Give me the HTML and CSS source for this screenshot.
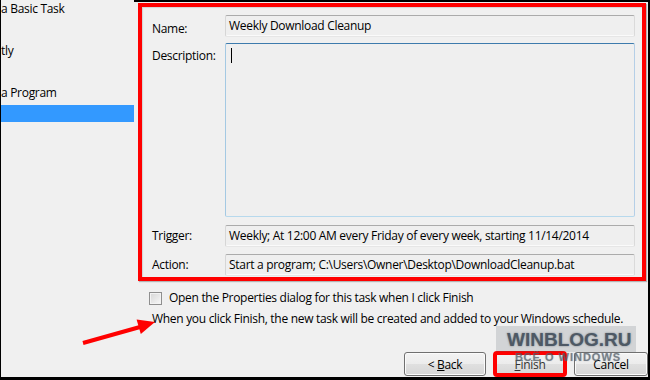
FILE: index.html
```html
<!DOCTYPE html>
<html>
<head>
<meta charset="utf-8">
<link rel="stylesheet" href="styles.css">
</head>
<body>
<div class="window">
  <aside class="steps">
    <div class="step">a Basic Task</div>
    <div class="step"></div>
    <div class="step">tly</div>
    <div class="step"></div>
    <div class="step">a Program</div>
    <div class="step selected"></div>
  </aside>
  <main class="panel">
    <section class="summary">
      <div class="row row-name"><label>Name:</label><div class="field">Weekly Download Cleanup</div></div>
      <div class="row row-desc"><label>Description:</label><div class="field textarea"><span class="caret"></span></div></div>
      <div class="row row-trigger"><label>Trigger:</label><div class="field">Weekly; At 12:00 AM every Friday of every week, starting 11/14/2014</div></div>
      <div class="row row-action"><label>Action:</label><div class="field">Start a program; C:\Users\Owner\Desktop\DownloadCleanup.bat</div></div>
    </section>
    <div class="check"><span class="box"></span><span>Open the Properties dialog for this task when I click Finish</span></div>
    <p class="note">When you click Finish, the new task will be created and added to your Windows schedule.</p>
    <div class="buttons">
      <button class="btn back">&lt; <u>B</u>ack</button>
      <button class="btn finish"><u>F</u>inish</button>
      <button class="btn cancel">Cancel</button>
    </div>
  </main>
  <svg class="arrow" width="82" height="36" viewBox="0 0 82 36">
    <line x1="5" y1="31" x2="62" y2="15" stroke="#ff0000" stroke-width="4"/>
    <polygon points="77,10 58.6,7.6 62.8,22" fill="#ff0000"/>
  </svg>
  <div class="watermark">
    <div class="wm-box"><span class="wm-title">WINBLOG.RU</span></div>
    <div class="wm-sub">ВСЁ О WINDOWS</div>
  </div>
</div>
</body>
</html>
```
FILE: styles.css
```css
* { box-sizing: border-box; }
html, body { margin: 0; padding: 0; }
body {
  width: 650px;
  height: 380px;
  overflow: hidden;
  background: #f0f0f0;
  font-family: "Open Sans", "Noto Sans", sans-serif;
  font-size: 12px;
  letter-spacing: -0.3px;
  color: #000;
}
.window {
  position: relative;
  width: 650px;
  height: 380px;
  border-left: 1px solid #000;
  border-right: 2px solid #000;
  border-bottom: 3px solid #000;
  display: grid;
  grid-template-columns: 133px 1fr;
  background: #f0f0f0;
  overflow: hidden;
}
.steps { margin-top: -2px; }
.step { height: 21px; line-height: 21px; white-space: nowrap; }
.step.selected { height: 17px; margin-top: 2px; background: #3399ff; }

.panel {
  display: flex;
  flex-direction: column;
  border-top: 2px solid #000;
  min-width: 0;
  overflow: hidden;
}
.summary {
  margin: 1px 2px 0 4px;
  border: 4px solid #ff0000;
  padding: 8px 7px 1px 10px;
  display: flex;
  flex-direction: column;
  box-shadow: 1px 1px 1px rgba(0,0,0,0.25), inset 1px 1px 1px rgba(0,0,0,0.12);
}
.row { display: flex; }
.row label { width: 73px; flex: none; line-height: 16px; white-space: nowrap; }
.row-name label { padding-top: 6px; }
.row-desc { margin-top: 6px; }
.row-desc label { padding-top: 5px; }
.row-trigger { margin-top: 8px; align-items: center; }
.row-action { margin-top: 7px; align-items: center; }
.field {
  flex: 1;
  min-width: 0;
  height: 22px;
  border: 1px solid;
  border-color: #ababab #dadada #e6e6e6 #d6d6d6;
  border-radius: 2px;
  padding: 2px 3px 0;
  line-height: 16px;
  background: #efefef;
  white-space: nowrap;
  overflow: hidden;
  box-shadow: inset 0 -1px 0 #fafafa;
}
.textarea {
  height: 174px;
  border-color: #3d7bad #b5cfe7 #b7d9ed #a4c9e3;
  padding: 4px 5px;
  box-shadow: none;
}
.caret { display: block; width: 1px; height: 15px; background: #000; }

.check {
  display: flex;
  align-items: center;
  margin: 9px 0 0 15px;
  line-height: 16px;
}
.box {
  width: 13px;
  height: 13px;
  border: 1px solid #8f8f8f;
  background: linear-gradient(135deg, #d6d6d6, #f8f8f8);
  box-shadow: inset 0 0 0 1px #f3f3f3;
  margin-right: 7px;
  flex: none;
}
.note { margin: 5px 0 0 18px; line-height: 16px; white-space: nowrap; }

.buttons {
  margin-top: auto;
  margin-bottom: 1px;
  display: flex;
  padding-left: 270px;
}
.btn {
  font: inherit;
  letter-spacing: inherit;
  color: #000;
  height: 24px;
  flex: none;
  padding: 0;
  border: 1px solid #707070;
  border-radius: 3px;
  background: linear-gradient(#f3f3f3, #ececec 50%, #e0e0e0 50%, #d6d6d6);
  box-shadow: inset 0 0 0 1px #fbfbfb;
}
.back { width: 82px; }
.finish {
  width: 72px;
  margin-left: 8px;
  outline: 4px solid #ff0000;
  outline-offset: -3px;
  color: #333;
}
.cancel { width: 74px; margin-left: 8px; }

.arrow { position: absolute; left: 77px; top: 312px; }

.watermark {
  position: absolute;
  left: 495px;
  top: 326px;
  width: 140px;
  font-family: "Liberation Sans", Arial, sans-serif;
  font-weight: bold;
  letter-spacing: 0;
  pointer-events: none;
}
.wm-box {
  height: 26px;
  background: rgba(80, 90, 100, 0.18);
  padding: 4px 0 0 11px;
}
.wm-title {
  display: block;
  font-size: 19px;
  line-height: 19px;
  color: #4e5965;
  text-shadow: 0 0 2px rgba(78, 89, 101, 0.7);
  white-space: nowrap;
}
.wm-sub {
  font-size: 11px;
  line-height: 11px;
  letter-spacing: 1px;
  padding-left: 19px;
  color: rgba(80, 92, 104, 0.6);
  text-shadow: 0 0 1px rgba(80, 92, 104, 0.5);
  white-space: nowrap;
}
```
